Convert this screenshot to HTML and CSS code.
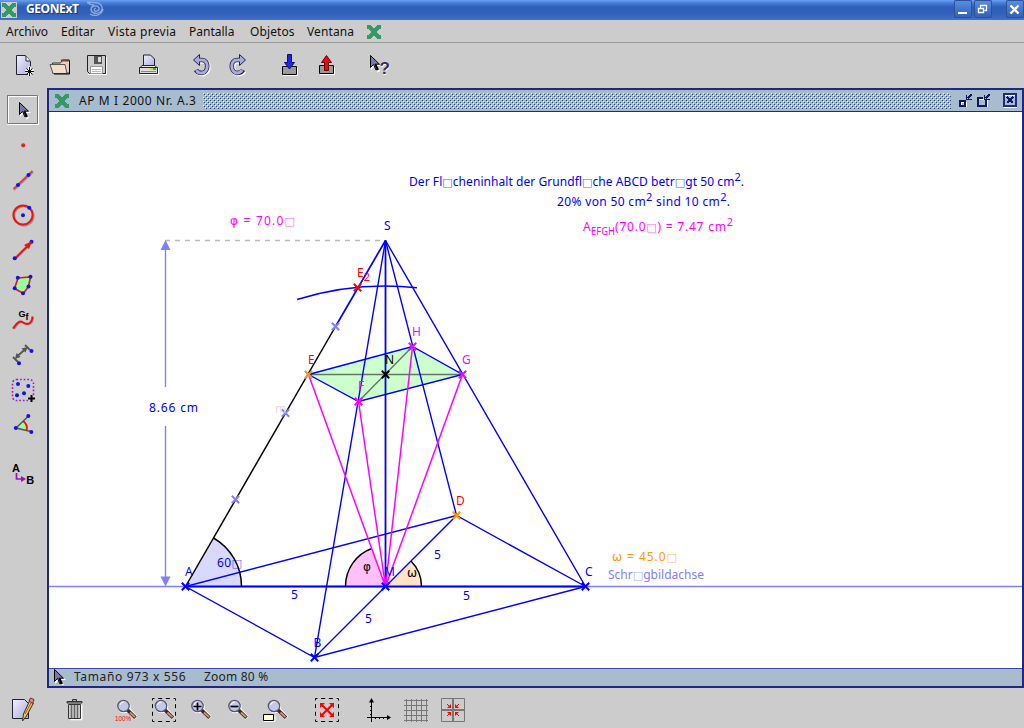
FILE: index.html
```html
<!DOCTYPE html>
<html lang="es">
<head>
<meta charset="utf-8">
<title>GEONExT</title>
<link rel="stylesheet" href="styles.css">
</head>
<body>
<svg class="defs" width="0" height="0">
  <defs>
    <linearGradient id="paper" x1="0" y1="0" x2="1" y2="1"><stop offset="0" stop-color="#f2f2ff"/><stop offset="1" stop-color="#a9a9dc"/></linearGradient>
    <pattern id="bump" width="4" height="4" patternUnits="userSpaceOnUse"><path d="M0 0h1v1h-1zM2 2h1v1h-1z" fill="#fff"/><path d="M1 1h1v1h-1zM3 3h1v1h-1z" fill="#284880"/></pattern>
    <symbol id="logo" viewBox="0 0 14 14"><path fill="#339966" d="M0 0h4v1h1v1h1v1h2v-1h1v-1h1v-1h4v4h-2v1h-1v1h-1v2h1v1h1v1h2v4h-4v-1h-1v-1h-1v-1h-2v1h-1v1h-1v1h-4v-4h2v-1h1v-1h1v-2h-1v-1h-1v-1h-2z"/></symbol>
    <g id="lens">
      <path d="M5 4L12.500 12" stroke="#fff" stroke-width="4.500"/>
      <circle r="6.500" cx=".7" cy=".8" fill="#fff"/>
      <path d="M4 4L12 11.800" stroke="#3c2a20" stroke-width="3.600"/>
      <path d="M6.500 6.500L11.500 11.200" stroke="#c69c7c" stroke-width="1.800"/>
      <circle r="5.700" fill="#c4c8e4" stroke="#555577" stroke-width="1.300"/>
      <path d="M-3.500 -1a4 4 0 0 1 4 -3" stroke="#fff" fill="none"/>
    </g>
    <g id="pointer"><path d="M1 1v14l3.500-3.500 3 6 2.500-1.500-3-5h5z" fill="#fff"/><path d="M.5 .5v12l3-3 2.500 5.500 1.500-.8-2.500-5h4.500z" fill="#7777aa" stroke="#000"/><path d="M5.500 9.500l2.500 5.500" stroke="#000" stroke-width="2"/></g>
    <g id="cross"><path d="M-3.700-3.700L3.700 3.700M-3.700 3.700L3.700-3.700" stroke-width="2"/></g>
    <circle id="dot" r="2" fill="#1010ee"/>
  </defs>
</svg>

<header class="titlebar">
  <span class="app-icon"><svg width="14" height="14"><use href="#logo"/></svg></span>
  <span class="app-name">GEONExT</span>
  <svg class="swirl" width="18" height="16" viewBox="87 1 18 16" fill="none" stroke="#8facdf"><path d="M87 2c6 1 13-1 15 5 1 5-4 7-8 6s-4-6 0-7c5-1 7 4 3 5-3 1-4-2-1-3M87 2c2 2 4 3 7 3M90 14c5 3 12 1 13-5" stroke-width="1.300"/></svg>
  <span class="window-buttons">
    <svg width="18" height="18" viewBox="954 0 18 18"><path d="M958 12h9v2h-9z" fill="#fff"/></svg>
    <svg width="18" height="18" viewBox="974 0 18 18" fill="none" stroke="#fff"><path d="M980.500 8v-2.500h6v5h-2M978.500 8.500h5v4h-5z" stroke-width="1.300"/></svg>
    <svg class="close" width="18" height="18" viewBox="1006 0 18 18"><path d="M1010.500 5.500l8 8m0-8l-8 8" stroke="#fff" stroke-width="2.400"/></svg>
  </span>
</header>

<nav class="menubar">
  <span class="m-archivo">Archivo</span><span class="m-editar">Editar</span><span class="m-vista">Vista previa</span><span class="m-pantalla">Pantalla</span><span class="m-objetos">Objetos</span><span class="m-ventana">Ventana</span>
  <svg width="14" height="14"><use href="#logo"/></svg>
</nav>

<div class="toolbar top-tools">
  <div class="group">
    <svg viewBox="6 43 36 45"><path d="M16.500 55.500h9l5 6v13h-14z" fill="url(#paper)" stroke="#223"/><path d="M26 56v5h4" fill="#fff" stroke="#223"/><g stroke="#fff" stroke-width="3"><path d="M25 71h9M29.500 66.500v9"/></g><path d="M25 71.500h9M29.500 67v9M26.500 68.500l6 6m0-6l-6 6" stroke="#111"/></svg>
    <svg viewBox="42 43 36 45"><path d="M52.500 73v-10h8l2-3h7v13z" fill="#e9d0bc" stroke="#333"/><path d="M61 60.500h8" stroke="#754040" stroke-width="2"/><path d="M50 64.500h15l2 9H53z" fill="#f2ddca" stroke="#555"/><path d="M69.500 61v13H54" fill="none" stroke="#000"/></svg>
    <svg viewBox="78 43 36 45"><path d="M88 74.500h18.500V57" fill="none" stroke="#fff"/><path d="M87.500 55.500h18v18h-16l-2-2z" fill="#ccc" stroke="#222"/><path d="M94 56h8v8h-8z" fill="#555"/><path d="M98 57h3v5h-3z" fill="#ddd"/><path d="M90.500 66.500h12v7h-12z" fill="#fff" stroke="#999"/><path d="M92 69.500h9M92 71.500h9" stroke="#bbb"/></svg>
  </div>
  <div class="group">
    <svg viewBox="130 43 36 45"><path d="M143.500 66v-11h7l4 4v8z" fill="url(#paper)" stroke="#223"/><path d="M142 65.500h13l2.500 3h-18z" fill="#eee" stroke="#222"/><path d="M140 74.500h18.500V68" fill="none" stroke="#fff"/><path d="M139.500 67.500h18v6h-18z" fill="#ddd" stroke="#222"/><path d="M150 69h3" stroke="#dd0" stroke-width="2"/><path d="M153 69h3" stroke="#0c3" stroke-width="2"/><path d="M141 71.500h15" stroke="#888"/></svg>
  </div>
  <div class="group">
    <svg viewBox="182 43 36 45"><path d="M197 60h5c7 0 7 12 0 13-3 0-5-1-6-3" fill="none" stroke="#fff" stroke-width="5" transform="translate(1 1)"/><path d="M197 60h5c7 0 7 12 0 13-3 0-5-1-6-3" fill="none" stroke="#222244" stroke-width="4.600"/><path d="M199.500 54.500v11l-6-5.500z" fill="#a9a9dc" stroke="#224"/><path d="M197 60h5c7 0 7 12 0 13-3 0-5-1-5-3" fill="none" stroke="#aaaadd" stroke-width="3"/></svg>
    <svg viewBox="218 43 36 45"><path d="M241 60h-4c-7 0-7 12 0 13 3 0 5-1 6-3" fill="none" stroke="#fff" stroke-width="5" transform="translate(1 1)"/><path d="M241 60h-4c-7 0-7 12 0 13 3 0 5-1 6-3" fill="none" stroke="#222244" stroke-width="4.600"/><path d="M239.500 54.500v11l6-5.500z" fill="#a9a9dc" stroke="#224"/><path d="M241 60h-4c-7 0-7 12 0 13 3 0 4-1 5-3" fill="none" stroke="#aaaadd" stroke-width="3"/></svg>
  </div>
  <div class="group">
    <svg viewBox="270 43 36 45"><path d="M283 75.500h14.500v-8" fill="none" stroke="#fff"/><path d="M282.500 66.500h14v8h-14z" fill="#999" stroke="#000"/><path d="M287.500 54.500h4v8h3l-5 6.500-5-6.500h3z" fill="#2222ee" stroke="#101060"/></svg>
    <svg viewBox="306 43 36 45"><path d="M320 74.500h14.500v-8" fill="none" stroke="#fff"/><path d="M319.500 65.500h14v8h-14z" fill="#999" stroke="#000"/><path d="M324.500 70.500h4v-8h3l-5-7-5 7h3z" fill="#f00" stroke="#600"/></svg>
  </div>
  <div class="group">
    <svg viewBox="358 43 36 45"><use href="#pointer" x="370" y="55"/><text class="help-mark" x="380" y="74.500" fill="#fff">?</text><text class="help-mark" x="379.500" y="73.500" fill="#333355">?</text></svg>
  </div>
</div>

<main class="workspace">
  <aside class="side-tools">
    <svg viewBox="0 93 47 35"><path d="M8.500 96.500h30v28h-31v-29h30" fill="none" stroke="#fff"/><path d="M8 95.500h29.500V123.500H7.500V95" fill="none" stroke="#777"/><path d="M8.500 123v-26.500h28.500" fill="none" stroke="#fff"/><use href="#pointer" x="19" y="102"/></svg>
    <svg viewBox="0 128 47 35"><circle cx="23.200" cy="145.300" r="2.100" fill="#e22"/></svg>
    <svg viewBox="0 163 47 35"><path d="M14 190l19-18" stroke="#999" stroke-width="2"/><path d="M13.500 189l19-18" stroke="#e04040" stroke-width="2"/><use href="#dot" x="18" y="185"/><use href="#dot" x="28.500" y="175"/></svg>
    <svg viewBox="0 198 47 35"><circle cx="24" cy="216" r="9.700" fill="none" stroke="#999" stroke-width="2"/><circle cx="23" cy="215" r="9.600" fill="none" stroke="#e11" stroke-width="2"/><use href="#dot" x="23" y="215.300"/><use href="#dot" x="29.200" y="207.800"/></svg>
    <svg viewBox="0 233 47 35"><path d="M15.500 259l17-17" stroke="#999" stroke-width="2"/><use href="#dot" x="31.500" y="241.700"/><path d="M15 258.500l12-12" stroke="#e11" stroke-width="2"/><path d="M32 241l-3 8-5-4z" fill="#e11"/><use href="#dot" x="14.700" y="258.300"/></svg>
    <svg viewBox="0 268 47 35"><path d="M18 278l12.500-1-2 9.500-5 7-9-5z" fill="#99ff99" stroke="#e11" stroke-width="1.700"/><use href="#dot" x="17.800" y="277.700"/><use href="#dot" x="30.500" y="276.700"/><use href="#dot" x="28.500" y="286.500"/><use href="#dot" x="23" y="293.200"/><use href="#dot" x="14.700" y="288.300"/></svg>
    <svg viewBox="0 303 47 35"><path d="M14 329c3-4 6-9 10-6 5 3 9 1 9-6" fill="none" stroke="#999" stroke-width="2"/><path d="M13 328.500c3-4 6-9 10-6 5 3 9 1 9.500-6" fill="none" stroke="#e11" stroke-width="2"/><text class="tool-label small" x="18.500" y="317">G</text><text class="tool-label small" x="25.500" y="320">f</text></svg>
    <svg viewBox="0 338 47 35"><path d="M13 357l5 5M25 345l5 5M17 356.500l9-8" stroke="#555" stroke-width="1.800"/><path d="M15 359l1.500-6 4 4zM27.500 347l-6 1.500 4 4z" fill="#555"/><use href="#dot" x="31.500" y="351"/><use href="#dot" x="19" y="363.300"/></svg>
    <svg viewBox="0 373 47 35"><rect x="12.500" y="379.500" width="21" height="21" rx="4" fill="none" stroke="#9922bb" stroke-width="1.600" stroke-dasharray="1.700 1.900"/><use href="#dot" x="18" y="384"/><use href="#dot" x="28.300" y="386"/><use href="#dot" x="24" y="393.300"/><use href="#dot" x="17" y="395.300"/><path d="M28 395h7v7h-7z" fill="#ccc"/><path d="M28 398.500h7M31.500 395v7" stroke="#000" stroke-width="2"/></svg>
    <svg viewBox="0 408 47 35"><path d="M16 428l6.500-7c3 1 5 5 4 9.500z" fill="#99ff99"/><path d="M28.500 416L16 428l15 3.500" fill="none" stroke="#555" stroke-width="1.500"/><path d="M23 421c3 2 4.500 5.500 3.500 9.500" fill="none" stroke="#e11" stroke-width="1.800"/><use href="#dot" x="28.300" y="416"/><use href="#dot" x="15.800" y="428"/><use href="#dot" x="31.300" y="432"/></svg>
    <svg class="last" viewBox="0 455 47 35"><text class="tool-label" x="12" y="472">A</text><text class="tool-label" x="26.200" y="484">B</text><path d="M16.500 473v6h6" fill="none" stroke="#9911bb" stroke-width="1.700"/><path d="M21 476l5 3-5 3z" fill="#9911bb"/></svg>
  </aside>

  <section class="frame">
    <div class="frame-title">
      <svg width="14" height="14"><use href="#logo"/></svg>
      <span class="doc-name">AP M I 2000 Nr. A.3</span>
      <svg class="bumps" width="748" height="16"><rect width="748" height="16" fill="url(#bump)"/></svg>
      <svg class="frame-buttons" width="71" height="21" viewBox="951 90 71 21" fill="none" shape-rendering="crispEdges">
        <g stroke="#fff" transform="translate(1 1)"><path d="M960.500 101.500h5v4h-5zM978.500 98.500h8v7h-9v-7zM1003.500 94.500h12v12h-12z"/></g>
        <path d="M960 101h5v5h-5z" stroke="#101860" stroke-width="2"/>
        <path d="M983 98h-5v8h8v-6" stroke="#101860" stroke-width="2"/>
        <g stroke="#101860" stroke-width="1.600"><path d="M971.500 94.500l-4 4m-1-4v5h5M989.500 94.500l-4 4m-1-4v5h5"/></g>
        <path d="M1004 94h12v12h-12z" stroke="#202880" stroke-width="2"/><path d="M1007 97l6 6m0-6l-6 6" stroke="#101860" stroke-width="2"/>
      </svg>
    </div>

    <svg class="canvas" width="973" height="556" viewBox="49 112 973 556" fill="none">
      <path d="M49 586.500H1022" stroke="#8080ff" stroke-width="1.500"/>
      <path d="M165 240.500H385" stroke="#bbb" stroke-width="1.300" stroke-dasharray="5 5"/>
      <path d="M165.500 245V387M165.500 426V581" stroke="#8080ff" stroke-width="1.400"/>
      <path d="M165.500 240l5 10h-10zM165.500 586.500l5-10h-10z" fill="#8080ff"/>

      <path d="M185.500 586.500L213.500 538A56 56 0 0 1 241.500 586.500z" fill="#d9d9ff"/>
      <path d="M385.500 586.500L371.800 549A40 40 0 0 0 345.500 586.500z" fill="#ffbff8"/>
      <path d="M385.500 586.500L411 561A36 36 0 0 1 421.500 586.500z" fill="#ffe4c8"/>
      <path d="M308.500 374.500L412.500 346.500 462.500 374.500 358.500 401.500z" fill="#ccffcc"/>
      <path d="M308.500 374.500H462.500M358.500 401.500L412.500 346.500" stroke="#667566" stroke-width="1.400"/>

      <g stroke="#0000ff" stroke-width="1.400">
        <path d="M385.500 240.500L585.500 586.500L314.500 657.500L185.500 586.500L456.500 515.500L585.500 586.500"/>
        <path d="M385.500 240.500L314.500 657.500L456.500 515.500z"/>
        <path d="M385.500 240.500V586.500M185.500 586.500H585.500" stroke-width="1.800"/>
        <path d="M385.500 240.500L335.500 326.500" stroke-width="1.700"/>
        <path d="M297 299.500A300 300 0 0 1 417 287.700"/>
        <path d="M308.500 374.500L412.500 346.500 462.500 374.500 358.500 401.500z"/>
      </g>
      <path d="M335.500 326.500L185.500 586.500" stroke="#000" stroke-width="1.500"/>
      <path d="M213.500 538A56 56 0 0 1 241.500 586.500M371.800 548.500A40 40 0 0 0 345.500 586.500M411 561A36 36 0 0 1 421.500 586.500" stroke="#000" stroke-width="1.500"/>
      <path d="M308.500 374.500L385.500 586.500L358.500 401.500M412.500 346.500L385.500 586.500L462.500 374.500" stroke="#ff00ff" stroke-width="1.500"/>

      <g stroke="#8080ff"><use href="#cross" x="335.500" y="326.500"/><use href="#cross" x="285.500" y="413"/><use href="#cross" x="235.500" y="499.500"/></g>
      <g stroke="#0000ff"><use href="#cross" x="185.500" y="586.500"/><use href="#cross" x="314.500" y="657.500"/><use href="#cross" x="585.500" y="586.500"/><use href="#cross" x="385.500" y="586.500"/></g>
      <g stroke="#ff00ff"><use href="#cross" x="358.500" y="401.500"/><use href="#cross" x="412.500" y="346.500"/><use href="#cross" x="462.500" y="374.500"/></g>
      <g stroke="#ff9900"><use href="#cross" x="308.500" y="374.500"/><use href="#cross" x="456.500" y="515.500"/></g>
      <use href="#cross" x="357.500" y="287.500" stroke="#ff0000"/>
      <use href="#cross" x="385.500" y="374.500" stroke="#000"/>

      <g class="label blue">
        <text x="409" y="186" textLength="335">Der Fl<tspan class="box">□</tspan>cheninhalt der Grundfl<tspan class="box">□</tspan>che ABCD betr<tspan class="box">□</tspan>gt 50 cm<tspan class="sup" dy="-5">2</tspan><tspan dy="5">.</tspan></text>
        <text x="557" y="206" textLength="173">20% von 50 cm<tspan class="sup" dy="-5">2</tspan><tspan dy="5"> sind 10 cm</tspan><tspan class="sup" dy="-5">2</tspan><tspan dy="5">.</tspan></text>
        <text x="149" y="412" textLength="49">8.66 cm</text>
        <text x="384" y="230">S</text><text x="185" y="576">A</text><text x="384" y="576">M</text><text x="585" y="576">C</text><text x="313.500" y="647">B</text>
        <text x="291" y="599">5</text><text x="463" y="600">5</text><text x="365" y="623">5</text><text x="434" y="559">5</text>
        <text x="217" y="567" textLength="25">60<tspan class="box">□</tspan></text>
      </g>
      <g class="label magenta">
        <text x="230" y="225" textLength="65"><tspan class="greek">φ</tspan> = 70.0<tspan class="box">□</tspan></text>
        <text x="583" y="231">A</text>
        <text class="sub" x="591" y="235" textLength="24" lengthAdjust="spacingAndGlyphs">EFGH</text>
        <text x="615" y="231" textLength="118">(70.0<tspan class="box">□</tspan>) = 7.47 cm<tspan class="sup" dy="-5">2</tspan></text>
        <text x="412" y="336">H</text><text x="462" y="364">G</text><text x="358" y="390">F</text>
      </g>
      <g class="label red"><text x="357" y="277">E<tspan class="sub" dy="4">2</tspan></text><text x="308" y="364">E</text><text x="456" y="505">D</text></g>
      <g class="label black"><text x="385" y="364">N</text><text class="greek" x="363" y="571">φ</text><text class="greek" x="407" y="577">ω</text></g>
      <text class="label orange" x="612" y="561" textLength="65"><tspan class="greek">ω</tspan> = 45.0<tspan class="box">□</tspan></text>
      <text class="label pale" x="608" y="579" textLength="96">Schr<tspan class="box">□</tspan>gbildachse</text>
      <text class="label faint" x="275" y="413">m</text>
    </svg>

    <div class="status"><svg width="14" height="16" viewBox="0 0 14 16"><use href="#pointer" x="1" y="0"/></svg><span class="size">Tamaño 973 x 556</span><span class="zoom">Zoom 80 %</span></div>
  </section>
</main>

<footer class="toolbar bottom-tools">
  <div class="group">
    <svg viewBox="4 688 37 40"><path d="M12.500 699.500h12l4 4v15h-16z" fill="url(#paper)" stroke="#223"/><path d="M22.500 721l1-7 6-13 4 2-7 13z" fill="#e8c848" stroke="#333"/><path d="M29 701l1.500-3 3.500 1.500-1.500 4z" fill="#e58b8b" stroke="#633"/><path d="M25 714l6-11" stroke="#c44"/></svg>
  </div>
  <div class="group">
    <svg viewBox="56 688 37 40"><path d="M69 704h12v15.500H69z" fill="#fff" transform="translate(1.500 .8)"/><path d="M68.500 704.500h12v14h-12z" fill="#ccc" stroke="#333"/><path d="M71.500 705v13M74.500 705v13M77.500 705v13" stroke="#666" stroke-width="1.500"/><path d="M67 703h15v-1.500H67zM72.500 701v-1.500h4v1.500" fill="#aaa" stroke="#333"/></svg>
  </div>
  <div class="group">
    <svg viewBox="108 688 37 40"><use href="#lens" x="123.500" y="706"/><text class="hundred" x="115" y="721" textLength="16" lengthAdjust="spacingAndGlyphs">100%</text></svg>
    <svg viewBox="145 688 37 40"><use href="#lens" x="161" y="706"/><path d="M152.500 698.500h23v23h-23z" fill="none" stroke="#000" stroke-dasharray="4 3.670" stroke-dashoffset="2"/></svg>
    <svg viewBox="182 688 37 40"><use href="#lens" x="197.500" y="706"/><path d="M193.500 706.500h8M197.500 702.500v8" stroke="#000" stroke-width="1.700"/></svg>
    <svg viewBox="219 688 37 40"><use href="#lens" x="234.500" y="706"/><path d="M230.500 706.500h8" stroke="#000" stroke-width="1.700"/></svg>
    <svg viewBox="256 688 37 40"><use href="#lens" x="274" y="706"/><path d="M264 721.500h11v-6" fill="none" stroke="#fff"/><path d="M263.500 714.500h10v6h-10z" fill="#ffffcc" stroke="#000"/></svg>
  </div>
  <div class="group">
    <svg viewBox="308 688 37 40"><path d="M315.500 698.500h23v23h-23z" fill="none" stroke="#000" stroke-dasharray="4 3.670" stroke-dashoffset="2"/><path d="M322 705l10 10m0-10l-10 10" stroke="#f00" stroke-width="2"/><path d="M320 703h5l-5 5zM334 703h-5l5 5zM320 717h5l-5-5zM334 717h-5l5-5z" fill="#f00"/></svg>
  </div>
  <div class="group">
    <svg viewBox="360 688 37 40"><path d="M371.500 699v23M367 717.500h23" stroke="#000"/><path d="M369 702.500l2.500-4.500 2.500 4.500zM387 715l4 2.500-4 2.500z" fill="#000"/><path d="M370 706.500h1M370 710.500h1M370 714.500h1M375.500 718v1M379.500 718v1M383.500 718v1" stroke="#000"/></svg>
    <svg viewBox="397 688 37 40"><path d="M404 700.500h24M404 705.500h24M404 710.500h24M404 715.500h24M404 720.500h24M406.500 699v23M411.500 699v23M416.500 699v23M421.500 699v23M426.500 699v23" stroke="#777"/></svg>
    <svg viewBox="434 688 37 40"><path d="M441.500 698.500h23v23h-23z" fill="none" stroke="#777"/><path d="M453 698v24M441 710h24" stroke="#777" stroke-width="2"/><path d="M447 704l3 3M459 704l-3 3M447 716l3-3M459 716l-3-3" stroke="#f00"/><path d="M451 704v4h-4zM455 704v4h4zM451 716v-4h-4zM455 716v-4h4z" fill="#f00"/></svg>
  </div>
</footer>
</body>
</html>
```
FILE: styles.css
```css
* { box-sizing: border-box; }

body {
  margin: 0;
  width: 1024px;
  height: 728px;
  display: flex;
  flex-direction: column;
  overflow: hidden;
  background: #ccc;
  color: #111;
  font: 12px/16px "Noto Sans", "DejaVu Sans", sans-serif;
}

svg { display: block; flex: none; }
.defs { position: absolute; }

.titlebar {
  flex: 0 0 20px;
  display: flex;
  align-items: center;
  background: linear-gradient(#6c9ff2 0, #5088e2 2px, #3f74d0 4px, #2f5eb8 7px, #3060b8 13px, #4071cb 20px);
}
.app-icon { width: 16px; height: 16px; margin: 0 9px 1px 1px; padding: 1px; background: #ccc; }
.app-name { width: 54px; margin-top: -3px; color: #fff; font-size: 12px; font-weight: 700; letter-spacing: -0.4px; text-shadow: 1px 1px 1px #153878; }
.swirl { margin: -2px 0 0 7px; }
.window-buttons { display: flex; gap: 2px; margin-left: auto; align-self: flex-start; }
.window-buttons svg { border-radius: 2px; background: linear-gradient(#5a90e4, #2f5fb3); box-shadow: inset 0 0 0 1px #2c529c; }
.window-buttons .close { margin-left: 12px; }

.menubar {
  flex: 0 0 23px;
  display: flex;
  align-items: center;
  padding: 1px 0 0 6px;
  border-bottom: 1px solid #999;
  white-space: nowrap;
}
.m-archivo { width: 55px; }
.m-editar { width: 47px; letter-spacing: 0.1px; }
.m-vista { width: 81px; letter-spacing: 0.3px; }
.m-pantalla { width: 61px; }
.m-objetos { width: 57px; letter-spacing: 0.1px; }
.m-ventana { width: 60px; letter-spacing: 0.1px; }

.toolbar { display: flex; }
.group { display: flex; }
.top-tools { flex: 0 0 45px; padding-left: 6px; gap: 16px; }
.top-tools svg { width: 36px; height: 45px; }
.help-mark { font: 700 17px "Liberation Sans", sans-serif; }

.workspace { flex: 0 0 600px; height: 600px; display: flex; }
.side-tools { width: 47px; padding-top: 5px; display: flex; flex-direction: column; }
.side-tools svg { width: 47px; height: 35px; }
.side-tools .last { margin-top: 12px; }
.tool-label { font: 700 11px "Liberation Sans", sans-serif; }
.tool-label.small { font-size: 9px; }

.frame { flex: 1; height: 600px; display: flex; flex-direction: column; border: 2px solid #202880; background: #a8bcd0; }
.frame-title { flex: 0 0 22px; display: flex; align-items: center; padding-left: 6px; border-bottom: 1px solid #202880; }
.doc-name { width: 118px; margin-left: 10px; letter-spacing: 0.6px; white-space: nowrap; }
.bumps { margin-left: 6px; }
.canvas { background: #fff; }
.status { flex: 0 0 18px; height: 18px; min-height: 0; display: flex; align-items: flex-start; padding-left: 4px; border-top: 1px solid #3848a0; line-height: 16px; white-space: nowrap; }
.status .size { width: 130px; margin-left: 7px; letter-spacing: 0.65px; color: #222; }
.status .zoom { letter-spacing: 0.2px; color: #222; }

.label { font: 12px "Noto Sans", "DejaVu Sans", sans-serif; }
.greek { font-family: "DejaVu Sans", sans-serif; }
.blue { fill: #0000ff; }
.magenta { fill: #ff00ff; }
.red { fill: #ff0000; }
.black { fill: #000; }
.orange { fill: #ff9900; }
.pale { fill: #8080ff; }
.faint { fill: #ddd; }
.box { font-family: "DejaVu Sans", sans-serif; font-size: 11px; fill-opacity: 0.7; }
.sup, .sub { font-size: 11px; }

.bottom-tools { flex: 0 0 40px; padding-left: 4px; gap: 15px; }
.bottom-tools svg { width: 37px; height: 40px; }
.hundred { font: 8px "Liberation Sans", sans-serif; fill: #f00; }
```
